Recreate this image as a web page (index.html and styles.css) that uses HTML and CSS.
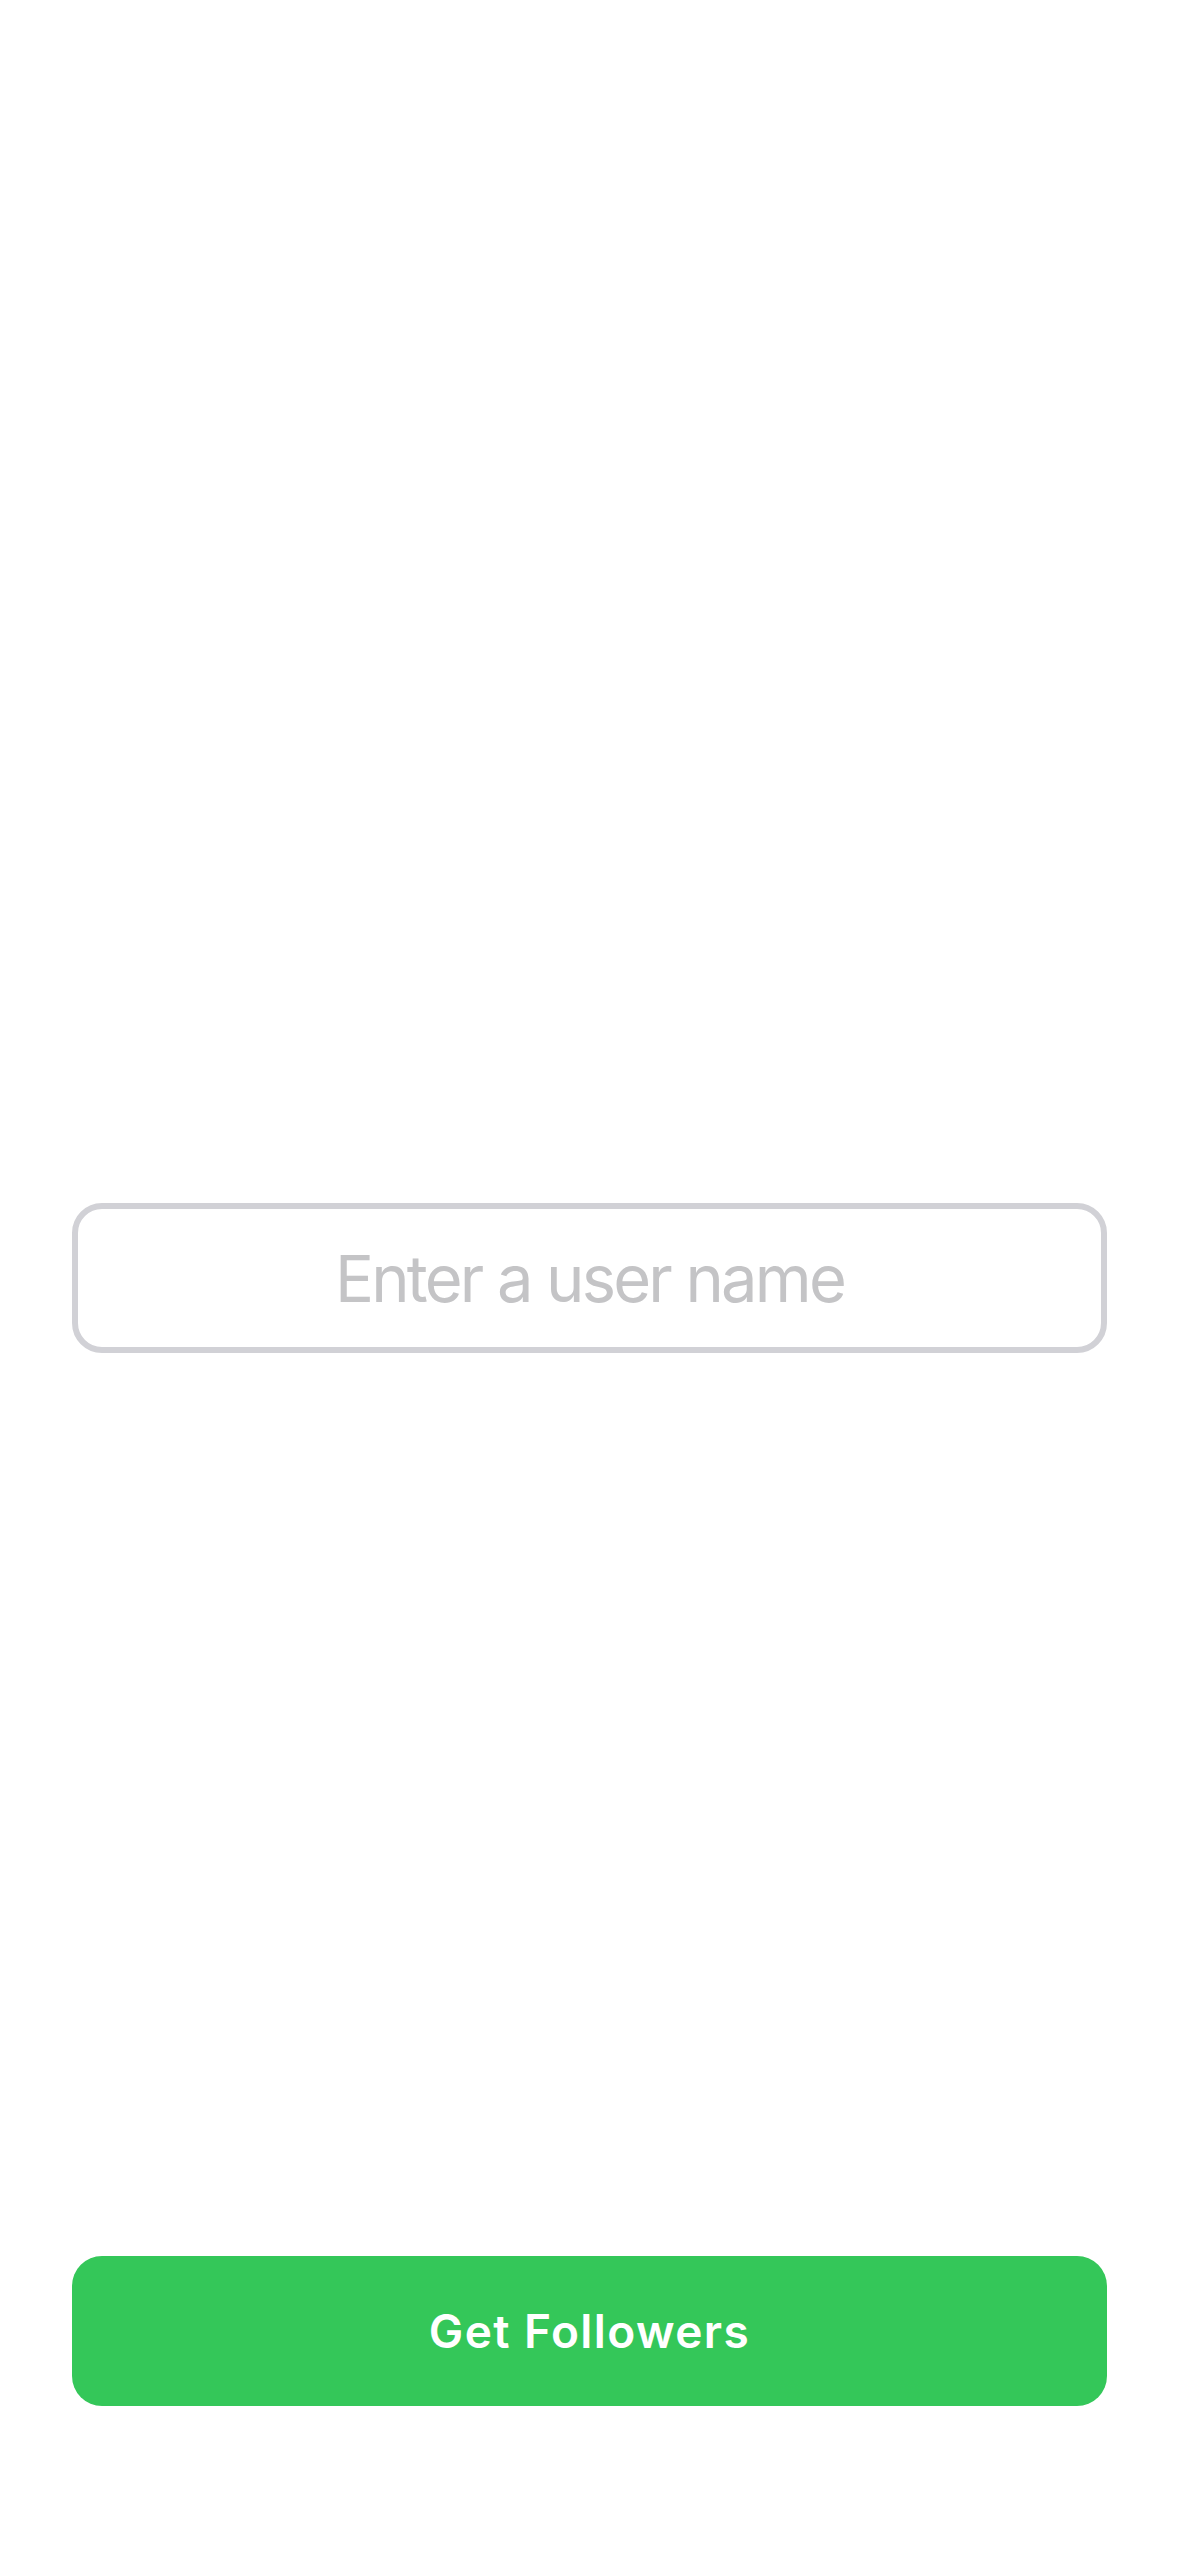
FILE: index.html
```html
<!DOCTYPE html>
<html lang="en">
<head>
<meta charset="utf-8">
<title>Get Followers</title>
<link rel="stylesheet" href="styles.css">
</head>
<body>
<main class="screen">
  <div class="logo-area"></div>
  <div class="field"><span class="placeholder">Enter a user name</span></div>
  <div class="spacer"></div>
  <button class="action">Get Followers</button>
</main>
</body>
</html>
```

FILE: styles.css
```css
html, body {
  margin: 0;
  padding: 0;
  background: #ffffff;
}
.screen {
  box-sizing: border-box;
  width: 1179px;
  height: 2556px;
  display: flex;
  flex-direction: column;
  padding: 0 72px 150px;
  font-family: Inter, "Noto Sans", sans-serif;
}
.logo-area {
  height: 1203px;
  flex: none;
}
.field {
  box-sizing: border-box;
  height: 150px;
  border: 6px solid #d1d1d6;
  border-radius: 30px;
  display: flex;
  align-items: center;
  justify-content: center;
}
.placeholder {
  font-size: 65px;
  color: #c4c4c6;
  letter-spacing: -2.8px;
  line-height: 1;
}
.spacer {
  flex: 1;
}
.action {
  height: 150px;
  border: none;
  border-radius: 30px;
  background: #34c759;
  color: #ffffff;
  font-family: Inter, "Noto Sans", sans-serif;
  font-weight: 600;
  font-size: 46px;
  letter-spacing: 1.4px;
  padding: 0;
}
```
